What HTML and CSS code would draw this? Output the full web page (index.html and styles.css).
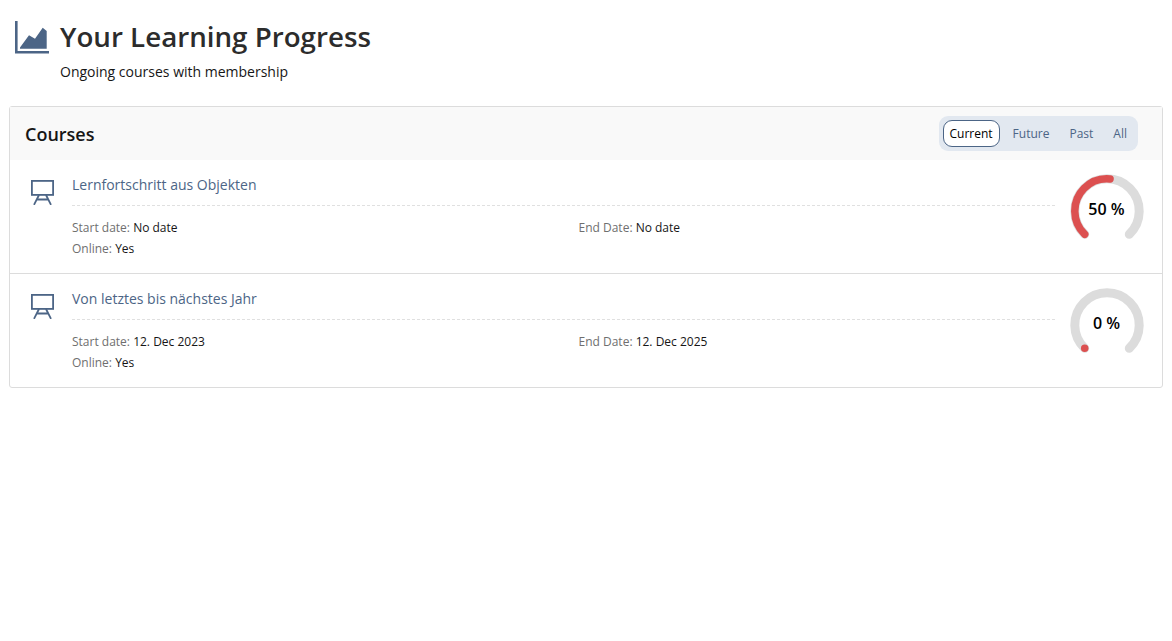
FILE: index.html
```html
<!DOCTYPE html>
<html lang="en">
<head>
    <meta charset="UTF-8">
    <meta name="viewport" content="width=device-width, initial-scale=1.0">
    <title>Your Learning Progress</title>
    <link rel="stylesheet" href="styles.css">
</head>
<body>
    <header class="page-head">
        <svg class="page-icon" viewBox="0 0 34 33" aria-hidden="true">
            <path class="axis" d="M1.300 0V31.300H34"/>
            <path class="area" d="M5 27.700V26.500L14 14.300 20 17.700 27.700 6.700 31.700 10V27.700Z"/>
        </svg>
        <div>
            <h1>Your Learning Progress</h1>
            <p class="subtitle">Ongoing courses with membership</p>
        </div>
    </header>

    <section class="card">
        <div class="card-head">
            <h2>Courses</h2>
            <div class="tabs">
                <a class="tab active">Current</a>
                <a class="tab">Future</a>
                <a class="tab">Past</a>
                <a class="tab">All</a>
            </div>
        </div>

        <div class="course">
            <svg class="course-icon" viewBox="0 0 24 25" aria-hidden="true">
                <rect x="0.900" y="0.900" width="21.200" height="14"/>
                <path d="M8 15L3 24.800M15 15L20 24.800M5.500 19.500H17.500"/>
            </svg>
            <div class="course-body">
                <a class="course-title">Lernfortschritt aus Objekten</a>
                <div class="course-meta">
                    <span><span class="key">Start date:</span> No date</span>
                    <span><span class="key">End Date:</span> No date</span>
                    <span><span class="key">Online:</span> Yes</span>
                </div>
            </div>
            <div class="gauge">
                <svg viewBox="0 0 74 74" aria-hidden="true">
                    <path class="gauge-track" d="M14.700 60.300A32.200 32.200 0 1 1 59.300 60.300"/>
                    <path class="gauge-value" pathLength="100" stroke-dasharray="52 100" d="M14.700 60.300A32.200 32.200 0 1 1 59.300 60.300"/>
                </svg>
                <span class="gauge-label">50 %</span>
            </div>
        </div>

        <div class="course">
            <svg class="course-icon" viewBox="0 0 24 25" aria-hidden="true">
                <rect x="0.900" y="0.900" width="21.200" height="14"/>
                <path d="M8 15L3 24.800M15 15L20 24.800M5.500 19.500H17.500"/>
            </svg>
            <div class="course-body">
                <a class="course-title">Von letztes bis nächstes Jahr</a>
                <div class="course-meta">
                    <span><span class="key">Start date:</span> 12. Dec 2023</span>
                    <span><span class="key">End Date:</span> 12. Dec 2025</span>
                    <span><span class="key">Online:</span> Yes</span>
                </div>
            </div>
            <div class="gauge">
                <svg viewBox="0 0 74 74" aria-hidden="true">
                    <path class="gauge-track" d="M14.700 60.300A32.200 32.200 0 1 1 59.300 60.300"/>
                    <path class="gauge-value" pathLength="100" stroke-dasharray="0 100" d="M14.700 60.300A32.200 32.200 0 1 1 59.300 60.300"/>
                </svg>
                <span class="gauge-label">0 %</span>
            </div>
        </div>
    </section>
</body>
</html>
```

FILE: styles.css
```css
body {
    font-family: "Open Sans", sans-serif;
    margin: 0;
    padding: 0 9px;
    color: #000;
    background: #fff;
}

/* page header */
.page-head {
    display: flex;
    align-items: flex-start;
    gap: 11px;
    padding: 15px 0 23px 6px;
}
.page-icon {
    width: 34px;
    height: 33px;
    margin-top: 6px;
    flex: none;
}
.page-icon .axis {
    fill: none;
    stroke: #4c6586;
    stroke-width: 2.600;
}
.page-icon .area {
    fill: #4c6586;
}
h1 {
    margin: 0;
    font-size: 27.720px;
    line-height: 43px;
    font-weight: 600;
    color: #2c2c2c;
}
.subtitle {
    margin: 3px 0 0;
    font-size: 14px;
    line-height: 22px;
    color: #161616;
}

/* card */
.card {
    border: 1px solid #dcdcdc;
    border-radius: 3px;
}
.card-head {
    display: flex;
    align-items: center;
    justify-content: space-between;
    height: 53px;
    padding: 0 24px 0 15px;
    background: #f9f9f9;
}
h2 {
    margin: 0;
    font-size: 18px;
    font-weight: 600;
    color: #161616;
}
.tabs {
    display: flex;
    gap: 6px;
    padding: 4px;
    background: #e2e8f0;
    border-radius: 9px;
}
.tab {
    padding: 0 6px;
    font-size: 12px;
    line-height: 25px;
    border: 1px solid transparent;
    border-radius: 9px;
    color: #4c6586;
}
.tab.active {
    background: #fff;
    border-color: #4c6586;
    color: #000;
}

/* course rows */
.course {
    display: flex;
    height: 113px;
    box-sizing: border-box;
    padding: 14px 19px 0 21px;
}
.course + .course {
    border-top: 1px solid #dcdcdc;
    height: 114px;
}
.course-icon {
    width: 24px;
    height: 25px;
    margin-top: 6px;
    flex: none;
    fill: none;
    stroke: #4c6586;
    stroke-width: 1.800;
}
.course-body {
    width: 983px;
    margin-left: 17px;
    flex: none;
}
.course-title {
    display: block;
    font-size: 14px;
    line-height: 22px;
    padding-bottom: 9px;
    border-bottom: 1px dashed #e0e0e0;
    color: #4c6586;
}
.course-meta {
    display: grid;
    grid-template-columns: 506.500px 1fr;
    margin-top: 11px;
    font-size: 12px;
    line-height: 21px;
    color: #161616;
}
.key {
    color: #6f6f6f;
}

/* progress gauge */
.gauge {
    position: relative;
    width: 74px;
    height: 74px;
    margin-left: 14.500px;
    flex: none;
}
.gauge svg {
    display: block;
    width: 74px;
    height: 74px;
}
.gauge path {
    fill: none;
    stroke-linecap: round;
}
.gauge-track {
    stroke: #dcdcdc;
    stroke-width: 9;
}
.gauge-value {
    stroke: #dc5050;
    stroke-width: 7.500;
}
.gauge-label {
    position: absolute;
    top: -2px;
    left: 0;
    width: 100%;
    font-size: 16px;
    line-height: 74px;
    font-weight: 600;
    text-align: center;
}
```
